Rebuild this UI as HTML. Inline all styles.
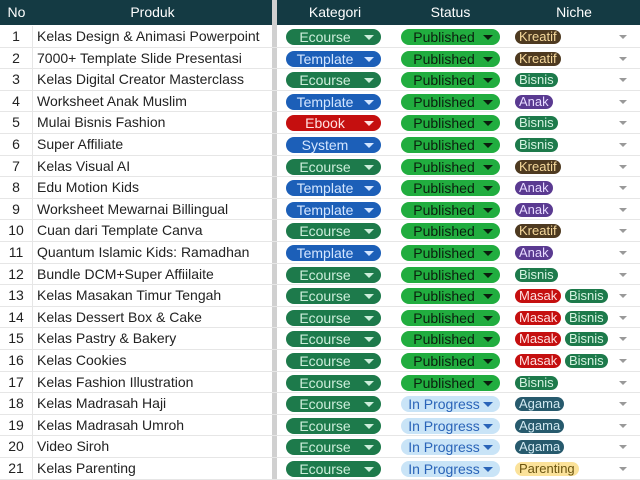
<!DOCTYPE html><html><head><meta charset="utf-8"><style>
*{margin:0;padding:0;box-sizing:border-box}
body{width:640px;height:480px;overflow:hidden;background:#fff;font-family:"Liberation Sans",Arial,sans-serif;position:relative}
.hd{position:absolute;top:0;height:25px;background:#143a43;color:#fff;font-size:14px;line-height:25px;text-align:center}
.sep{position:absolute;top:0;left:272px;width:5px;height:480px;background:#d0d0d0}
.r{position:absolute;left:0;width:640px;height:21.6px;border-bottom:1px solid #e6e6e6;font-size:14px;color:#222}
.r>div{position:absolute;top:0;height:100%;line-height:21px}
.no{left:0;width:33px;text-align:center;border-right:1px solid #e6e6e6}
.pr{left:37px}
.p{position:absolute;top:3px;height:16px;border-radius:8px;font-size:14px;line-height:17px}
.k{left:286px;width:95px}
.s{left:401px;width:99px}
.p span{position:absolute;top:0}
.k span{left:0;width:78px;text-align:center}
.s span{left:0;width:86px;text-align:center}
.p i{position:absolute;right:7px;top:6px;border-left:5px solid transparent;border-right:5px solid transparent;border-top:5px solid}
.eco{background:#1d7a4b;color:#cdeedb}.tem{background:#1c5fb8;color:#d4e6ff}.ebo{background:#c50f0f;color:#ffe0e0}.sys{background:#1c5fb8;color:#d4e6ff}
.pub{background:#21ad3f;color:#0b1f0e}.inp{background:#c9e4f7;color:#2a64b8}
.n{position:absolute;top:4px;height:14px;border-radius:7px;font-size:13px;line-height:14px;padding:0 4px}
.kr{background:#4e3a20;color:#f6d99c}.bi{background:#1d7a4b;color:#d6f3e1}.an{background:#5a3a91;color:#e6d9ff}.ma{background:#c50f0f;color:#ffe0e0}.ag{background:#275a6d;color:#d1e8f1}.pa{background:#fbe29a;color:#6a5410}
.dd{position:absolute;left:619px;top:9px;border-left:4px solid transparent;border-right:4px solid transparent;border-top:4px solid #999}
</style></head><body>
<div class="hd" style="left:0;width:33px">No</div>
<div class="hd" style="left:33px;width:239px">Produk</div>
<div class="hd" style="left:277px;width:116px">Kategori</div>
<div class="hd" style="left:393px;width:115px">Status</div>
<div class="hd" style="left:508px;width:132px">Niche</div>
<div class="sep"></div>
<div id="rows"></div>
<script>
var d=[["Kelas Design & Animasi Powerpoint","eco","pub",["kr"]],["7000+ Template Slide Presentasi","tem","pub",["kr"]],["Kelas Digital Creator Masterclass","eco","pub",["bi"]],["Worksheet Anak Muslim","tem","pub",["an"]],["Mulai Bisnis Fashion","ebo","pub",["bi"]],["Super Affiliate","sys","pub",["bi"]],["Kelas Visual AI","eco","pub",["kr"]],["Edu Motion Kids","tem","pub",["an"]],["Worksheet Mewarnai Billingual","tem","pub",["an"]],["Cuan dari Template Canva","eco","pub",["kr"]],["Quantum Islamic Kids: Ramadhan","tem","pub",["an"]],["Bundle DCM+Super Affiilaite","eco","pub",["bi"]],["Kelas Masakan Timur Tengah","eco","pub",["ma","bi"]],["Kelas Dessert Box & Cake","eco","pub",["ma","bi"]],["Kelas Pastry & Bakery","eco","pub",["ma","bi"]],["Kelas Cookies","eco","pub",["ma","bi"]],["Kelas Fashion Illustration","eco","pub",["bi"]],["Kelas Madrasah Haji","eco","inp",["ag"]],["Kelas Madrasah Umroh","eco","inp",["ag"]],["Video Siroh","eco","inp",["ag"]],["Kelas Parenting","eco","inp",["pa"]]];
var K={eco:"Ecourse",tem:"Template",ebo:"Ebook",sys:"System"},S={pub:"Published",inp:"In Progress"},N={kr:"Kreatif",bi:"Bisnis",an:"Anak",ma:"Masak",ag:"Agama",pa:"Parenting"};
var h="";d.forEach(function(r,i){var y=26+i*21.6;var n="",x=515;r[3].forEach(function(c){n+='<span class="n '+c+'" style="left:'+x+'px">'+N[c]+'</span>';x+=c=="ma"?50:0});
h+='<div class="r" style="top:'+y+'px"><div class="no">'+(i+1)+'</div><div class="pr">'+r[0].replace(/&/g,"&amp;")+'</div><span class="p k '+r[1]+'"><span>'+K[r[1]]+'</span><i></i></span><span class="p s '+r[2]+'"><span>'+S[r[2]]+'</span><i></i></span>'+n+'<span class="dd"></span></div>'});
document.getElementById("rows").innerHTML=h;
</script>
</body></html>
